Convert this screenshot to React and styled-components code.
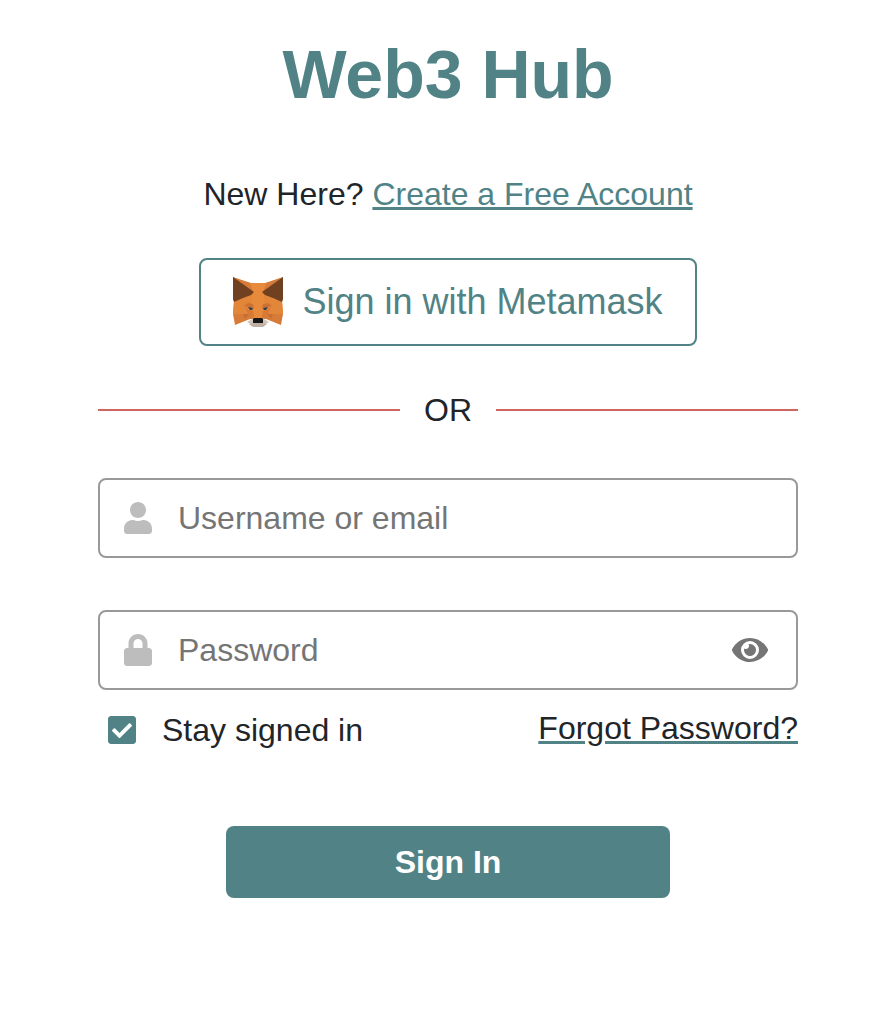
import React from "react";
import styled, { createGlobalStyle } from "styled-components";
import { FaUser, FaLock, FaEye, FaCheckSquare } from "react-icons/fa";

const teal = "#518386";
const ink = "#212529";

const GlobalStyle = createGlobalStyle`
  *, *::before, *::after { box-sizing: border-box; }
  body {
    margin: 0;
    background: #fff;
    color: ${ink};
    font: 32px/48px "Liberation Sans", Arial, sans-serif;
  }
  button, input { font: inherit; }
`;

const Page = styled.main`
  padding: 32px 86px 112px 98px;
`;

const Form = styled.form`
  display: flex;
  flex-direction: column;
  align-items: center;
`;

const Title = styled.h1`
  margin: 0 0 54px;
  color: ${teal};
  font-size: 68px;
  line-height: 84px;
  font-weight: 700;
`;

const Intro = styled.p`
  margin: 0 0 40px;
`;

const TextLink = styled.a`
  color: ${(p) => p.$color};
  line-height: 44px;
  text-decoration: underline;
  text-decoration-color: ${teal};
  text-decoration-thickness: 3px;
  text-underline-offset: 2px;
`;

const MetamaskButton = styled.button`
  display: flex;
  align-items: center;
  gap: 19px;
  height: 88px;
  padding: 0 32px;
  border: 2px solid ${teal};
  border-radius: 8px;
  background: #fff;
  color: ${teal};
  font-size: 36px;
  cursor: pointer;
`;

const FoxLogo = styled.svg`
  width: 50px;
  height: 50px;
`;

const Divider = styled.div`
  display: flex;
  align-items: center;
  gap: 24px;
  width: 100%;
  margin: 40px 0 44px;

  &::before, &::after {
    content: "";
    flex: 1;
    height: 2px;
    background: #d0655f;
  }
`;

const Field = styled.label`
  display: flex;
  align-items: center;
  gap: 26px;
  width: 100%;
  height: 80px;
  padding: 0 28px 0 24px;
  border: 2px solid #999;
  border-radius: 8px;
  color: #bdbdbd;

  & + & { margin-top: 52px; }
  > svg { width: 28px; height: 32px; flex: none; }
`;

const TextInput = styled.input`
  flex: 1;
  min-width: 0;
  padding: 0;
  border: 0;
  outline: 0;
  background: transparent;
  color: ${ink};

  &::placeholder { color: #757575; opacity: 1; }
`;

const EyeButton = styled.button`
  display: flex;
  padding: 0;
  border: 0;
  background: none;
  color: #757575;
  cursor: pointer;

  svg { width: 36px; height: 32px; }
`;

const Options = styled.div`
  display: flex;
  justify-content: space-between;
  width: 100%;
  margin: 16px 0 72px;
  padding-left: 10px;
`;

const StayLabel = styled.label`
  display: flex;
  align-items: center;
  gap: 26px;
`;

const CheckBox = styled.span`
  display: grid;
  color: ${teal};

  input, svg {
    grid-area: 1 / 1;
    width: 28px;
    height: 32px;
    margin: 0;
  }
  input { appearance: none; border: 2px solid ${teal}; border-radius: 4px; height: 28px; align-self: center; }
  input:checked { border-color: transparent; }
  svg { visibility: hidden; pointer-events: none; }
  input:checked + svg { visibility: visible; }
`;

const SubmitButton = styled.button`
  width: 444px;
  max-width: 100%;
  height: 72px;
  border: 0;
  border-radius: 8px;
  background: ${teal};
  color: #fff;
  font-weight: 700;
  cursor: pointer;
`;

function FoxHalf() {
  return (
    <>
      <path fill="#d77c38" d="M0 0 18 6h7v36H17L2 48 0 37 1 24 0 22Z" />
      <path fill="#e78a3b" d="M17 6h8v36h-4l-2-12-8-5-11 12 3-13 17-9Z" />
      <path fill="#e28639" d="M19 15 1 24 0 37h15l6 4-1-8-8-4 4-3h3Z" />
      <path fill="#6f4120" d="M0 0 21 15 18 18 10 21 1 25 0 22Z" />
      <path fill="#cf7033" d="M11 29 15 26 20 27l1 4-5-1Z" />
      <path fill="#c96d32" d="M10 37h6l-4 5Z" />
      <path fill="#d77835" d="M12 30l4 3 4 1 1 7-6-4Z" />
      <path fill="#2f4150" d="m15 30 5 1-1 2-2 0Z" />
      <path fill="#d4c3b7" d="m14 45 7-4v4l4 1v2H19Z" />
      <path fill="#c0b0a3" d="M16 47l5-1h4v4h-5Z" />
      <path fill="#171717" d="M21 41h4v5h-5v-4Z" />
    </>
  );
}

function Fox() {
  return (
    <FoxLogo viewBox="0 0 50 50" aria-hidden="true">
      <FoxHalf />
      <g transform="matrix(-1 0 0 1 50 0)">
        <FoxHalf />
      </g>
    </FoxLogo>
  );
}

export default function App() {
  const [visible, setVisible] = React.useState(false);
  return (
    <Page>
      <GlobalStyle />
      <Form onSubmit={(e) => e.preventDefault()}>
        <Title>Web3 Hub</Title>
        <Intro>
          New Here? <TextLink href="#register" $color={teal}>Create a Free Account</TextLink>
        </Intro>
        <MetamaskButton type="button">
          <Fox />
          Sign in with Metamask
        </MetamaskButton>
        <Divider>OR</Divider>
        <Field>
          <FaUser aria-hidden="true" />
          <TextInput type="text" aria-label="Username or email" placeholder="Username or email" />
        </Field>
        <Field>
          <FaLock aria-hidden="true" />
          <TextInput type={visible ? "text" : "password"} aria-label="Password" placeholder="Password" />
          <EyeButton type="button" aria-label="Show password" onClick={() => setVisible(!visible)}>
            <FaEye />
          </EyeButton>
        </Field>
        <Options>
          <StayLabel>
            <CheckBox>
              <input type="checkbox" defaultChecked />
              <FaCheckSquare aria-hidden="true" />
            </CheckBox>
            Stay signed in
          </StayLabel>
          <TextLink href="#forgot" $color={ink}>Forgot Password?</TextLink>
        </Options>
        <SubmitButton type="submit">Sign In</SubmitButton>
      </Form>
    </Page>
  );
}
